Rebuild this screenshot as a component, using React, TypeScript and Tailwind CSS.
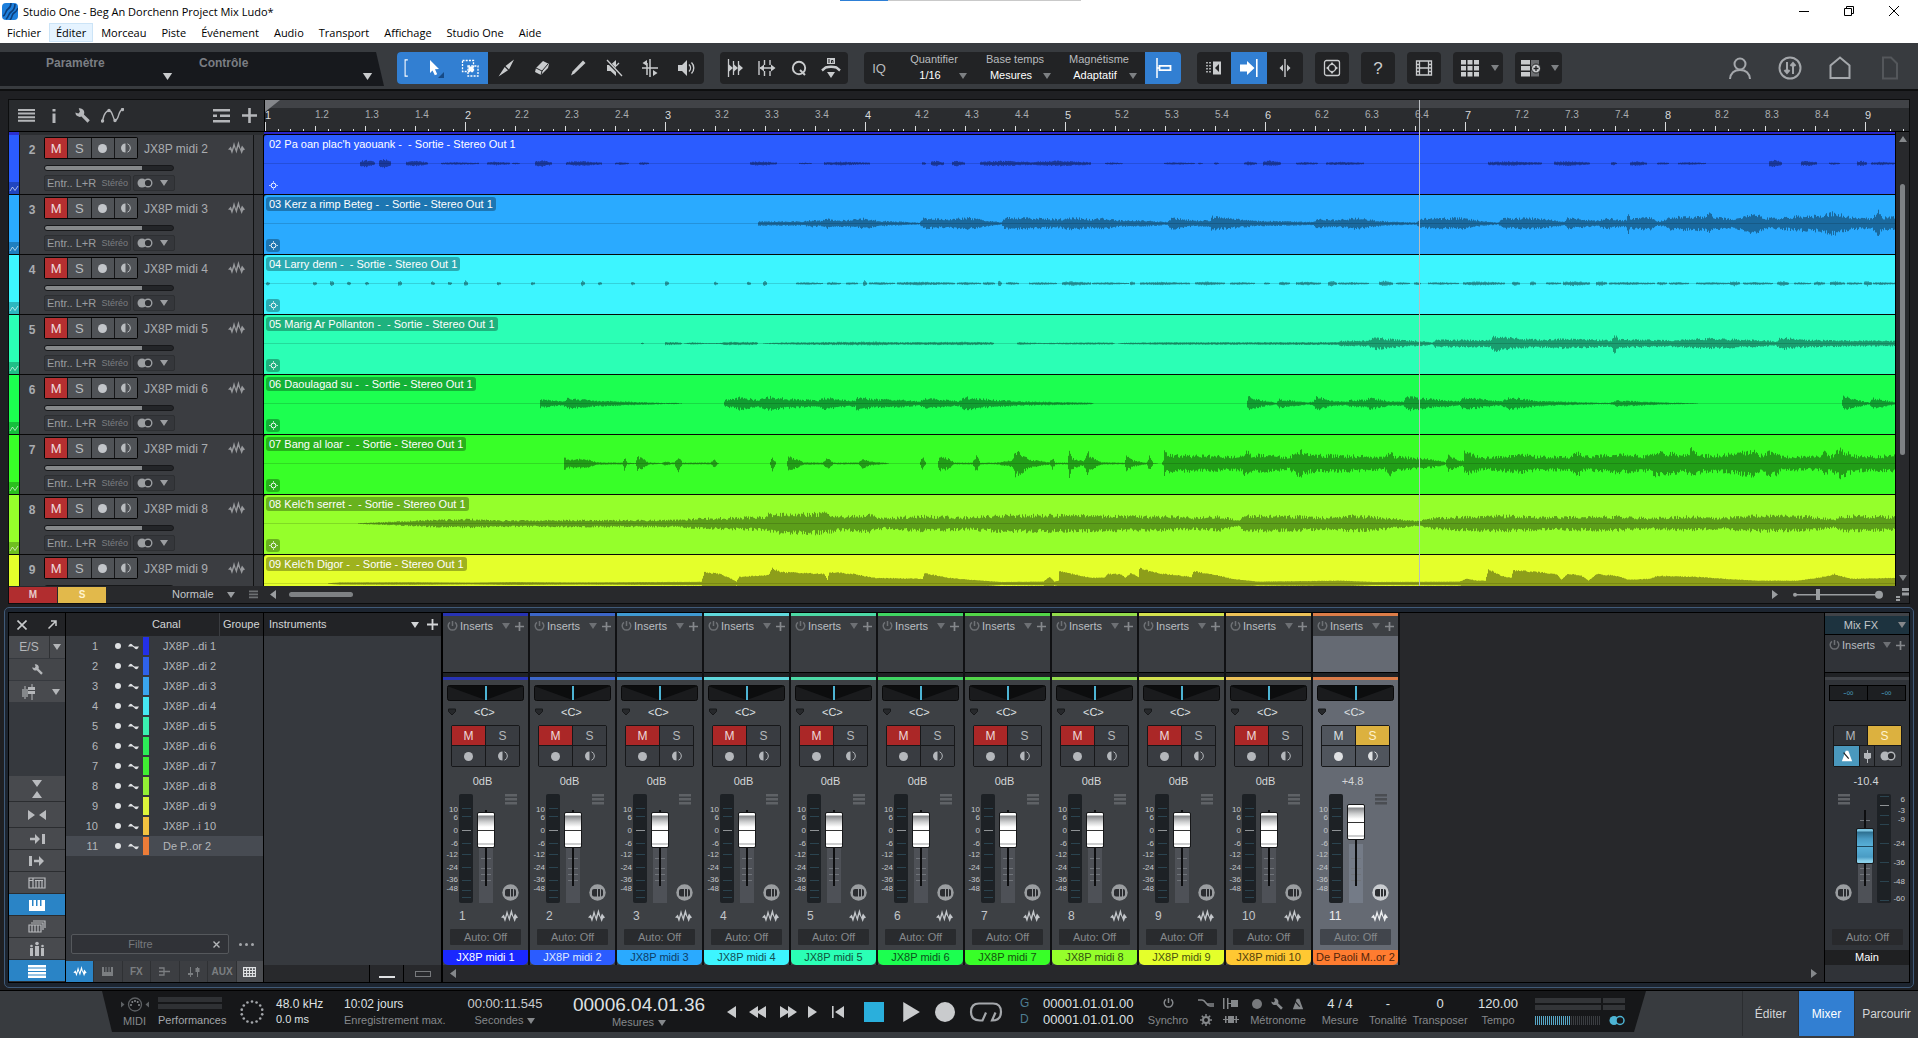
import type { ReactNode } from "react";
import clsx from "clsx";

type Point = [number, number];

interface Track {
  id: number;
  color: string;
  title: string;
  wave: Point[];
  solid?: boolean;
}

const LANE_WIDTH = 1633;
const LANE_CENTER = 28;

/* A burst is a short isolated sound: [start, end, amplitude]. */
const bursts = (list: [number, number, number][]): Point[] =>
  list.flatMap(([from, to, amp]): Point[] => [[from - 1, 0], [from, amp * 0.7], [from + (to - from) * 0.4, amp], [to, amp * 0.5], [to + 1, 0]]);

const WAVE_2 = bursts([
  [96, 110, 4], [115, 126, 5], [142, 163, 3], [177, 214, 1.4], [223, 245, 2], [248, 255, 1], [271, 287, 3.4], [302, 337, 2.6], [351, 364, 1.4], [375, 384, 1.6],
  [486, 512, 2.4], [535, 547, 1], [560, 605, 2], [658, 661, 2], [667, 679, 3], [688, 700, 3], [716, 770, 3], [771, 826, 3], [841, 858, 1.2], [900, 930, 1.3],
  [934, 938, 1], [950, 954, 1.4], [980, 992, 2], [999, 1016, 3.2], [1032, 1053, 1.5], [1062, 1099, 1.8], [1224, 1277, 2.4], [1290, 1325, 2.6], [1347, 1352, 2],
  [1366, 1382, 2.6], [1393, 1404, 1.5], [1414, 1441, 1.4], [1505, 1517, 4], [1537, 1552, 3], [1565, 1575, 1.3], [1593, 1602, 3], [1607, 1631, 1.8],
]);

const WAVE_3: Point[] = [
  [493, 0], [494, 2.4], [539, 2.5], [548, 4], [557, 3], [563, 5.5], [570, 3.5], [584, 4], [600, 6], [615, 3], [631, 2.4], [655, 1], [659, 6], [684, 5], [703, 7], [721, 3.4], [737, 1.5],
  [741, 7], [772, 6], [795, 5], [807, 7], [826, 5], [842, 6], [856, 3.6], [882, 3.4], [903, 1.6], [907, 7], [930, 3.4], [946, 3.6], [947, 8], [972, 5], [993, 3], [1049, 1.8], [1052, 5],
  [1073, 4], [1091, 6.5], [1120, 2.4], [1152, 1.2], [1156, 5.6], [1197, 6.5], [1221, 2.4], [1234, 1.2], [1238, 6], [1274, 6.4], [1300, 2], [1303, 6.5], [1332, 3], [1342, 6.5], [1359, 3.4],
  [1362, 5], [1364, 14], [1366, 6], [1385, 7.5], [1393, 2.4], [1401, 4], [1406, 7.5], [1441, 8], [1444, 12], [1449, 8], [1467, 5], [1484, 9], [1488, 12], [1500, 7], [1512, 6], [1533, 8.5],
  [1554, 9], [1570, 13], [1586, 7], [1607, 6], [1614, 14], [1618, 7], [1633, 8],
];

const WAVE_4 = bursts([
  ...[2, 49, 66, 83, 101, 134, 167, 184, 200, 233, 267, 317, 334, 367, 401, 450, 483, 499].map((x, i): [number, number, number] => [x, x + 3, i % 3 === 2 ? 3.4 : 2.2]),
  [532, 558, 1.4], [563, 576, 1.6], [582, 593, 1.6], [599, 602, 4], [605, 630, 1.6], [633, 690, 2], [693, 716, 1.6], [719, 730, 1.8], [734, 737, 3.4], [742, 754, 1.6], [765, 792, 1.5],
  [798, 826, 2.4], [828, 864, 1.4], [866, 870, 2.4], [876, 925, 1.8], [931, 960, 2], [966, 990, 1.5], [1000, 1005, 1.4], [1015, 1025, 2], [1032, 1056, 2], [1064, 1072, 3],
  [1074, 1104, 1.5], [1115, 1128, 3], [1132, 1145, 1.4], [1150, 1156, 2], [1164, 1194, 1.5], [1199, 1240, 2.2], [1248, 1255, 2.4], [1266, 1271, 2.6], [1282, 1296, 1.6], [1299, 1325, 2.6],
  [1332, 1342, 2.8], [1345, 1390, 1.6], [1393, 1402, 2], [1405, 1424, 1.5], [1432, 1465, 1.5], [1466, 1475, 3], [1479, 1508, 1.6], [1513, 1524, 2.6], [1530, 1546, 1.4],
  [1550, 1560, 2.2], [1566, 1580, 2.4], [1583, 1597, 1.5], [1600, 1607, 3], [1609, 1632, 1.6],
]);

const WAVE_5: Point[] = [
  [376, 0], [378, 1], [380, 0], [400, 0], [401, 1.8], [416, 1.2], [418, 0], [428, 1.4], [440, 0.5], [456, 0.6], [460, 1.8], [492, 1.6], [494, 0], [505, 0.6], [520, 1.2], [560, 1.6], [610, 2],
  [640, 1.4], [690, 1.8], [728, 1.5], [730, 0], [752, 0], [754, 1.6], [766, 1], [775, 0.6], [826, 1.2], [848, 1], [851, 0], [860, 0.8], [900, 1.4], [960, 1.4], [1073, 1.6], [1077, 3],
  [1104, 3.4], [1110, 7], [1126, 5], [1163, 2.2], [1168, 1.2], [1171, 4.4], [1226, 4], [1229, 9], [1247, 6.4], [1263, 5], [1285, 4.6], [1300, 6], [1330, 4.4], [1347, 3.6], [1350, 11], [1354, 5],
  [1406, 3.6], [1441, 6], [1459, 5.4], [1500, 3.6], [1512, 2.4], [1516, 7], [1539, 4.4], [1580, 3.4], [1633, 3],
];

const WAVE_6: Point[] = [
  [275, 0], [276, 5], [298, 2.4], [303, 6], [314, 5], [335, 3.2], [367, 2], [401, 0.6], [411, 0.8], [420, 0], [459, 0], [461, 4.4], [470, 5], [475, 7.4], [494, 4], [504, 8], [525, 5.4], [554, 3.6],
  [560, 7], [584, 3.4], [591, 3.6], [592, 7.6], [610, 5], [640, 4], [655, 2.4], [660, 6], [695, 2.8], [700, 7.4], [727, 4.4], [758, 2.4], [826, 1], [830, 0], [982, 0], [984, 8], [996, 4], [1012, 1],
  [1015, 5], [1044, 1.2], [1049, 2.6], [1052, 8], [1068, 3], [1083, 2], [1085, 4], [1102, 4], [1105, 7], [1126, 2.4], [1139, 2.4], [1142, 8.4], [1163, 5.6], [1195, 2.6], [1199, 7.4], [1237, 2.4],
  [1245, 7.4], [1274, 3], [1337, 0.8], [1345, 0.8], [1353, 3.4], [1406, 1], [1433, 0.3], [1436, 0], [1577, 0], [1579, 8], [1592, 4.4], [1605, 1], [1609, 6.4], [1631, 1.4], [1633, 1],
];

const WAVE_7: Point[] = [
  [299, 0], [300, 8], [304, 5], [324, 5], [332, 1.4], [358, 1], [360, 8], [363, 1], [371, 0.5], [373, 8], [377, 7], [384, 1.4], [397, 0.5], [401, 3], [406, 1], [410, 1.2], [414, 9], [418, 1], [446, 1],
  [450, 5], [453, 1], [455, 0], [505, 0], [508, 8], [512, 0], [522, 0], [524, 8], [531, 6], [539, 1.4], [558, 1], [563, 7], [569, 1], [594, 1], [598, 6], [605, 2.4], [621, 0.8], [626, 0], [655, 0],
  [658, 8], [662, 0], [673, 0], [675, 9], [684, 6], [690, 1], [708, 1], [712, 9], [716, 1], [732, 1], [748, 4], [751, 14], [757, 12], [764, 5], [785, 1.4], [788, 7], [791, 1], [803, 1], [805, 15],
  [808, 6], [819, 2.4], [823, 14], [827, 7], [837, 1.4], [860, 0.8], [862, 9], [869, 3.6], [882, 0.8], [885, 8], [889, 0.5], [897, 0], [899, 3], [900, 14], [903, 10], [940, 9], [977, 8], [981, 15],
  [988, 10], [1004, 10], [1025, 7], [1030, 12], [1036, 15], [1046, 10], [1099, 9], [1120, 7], [1125, 15], [1131, 8], [1152, 7], [1173, 4], [1181, 1.4], [1184, 9], [1195, 3.4], [1199, 4], [1200, 13],
  [1221, 7], [1258, 11], [1274, 8], [1306, 8], [1314, 14], [1319, 8], [1353, 11], [1385, 9], [1390, 14], [1422, 10], [1427, 17], [1438, 10], [1459, 10], [1488, 15], [1499, 9], [1504, 14], [1512, 13],
  [1517, 8], [1555, 8], [1561, 15], [1565, 8], [1576, 16], [1592, 9], [1629, 9], [1633, 13],
];

const WAVE_8: Point[] = [
  [90, 0], [100, 0.8], [128, 2], [165, 4], [208, 5], [234, 3.6], [313, 4], [360, 4], [409, 4], [435, 6], [472, 7], [501, 8], [504, 11], [562, 12], [573, 8], [605, 10], [620, 6], [652, 9], [705, 7.4],
  [737, 10], [826, 9.4], [866, 8.4], [903, 8.4], [930, 7], [956, 8.4], [975, 3.4], [980, 9.4], [1036, 8.4], [1062, 7], [1089, 9.4], [1120, 7], [1155, 2.6], [1163, 6], [1195, 8], [1237, 9.4],
  [1279, 7.4], [1353, 8.4], [1385, 6.4], [1422, 8.4], [1454, 6.4], [1491, 9.4], [1544, 8.4], [1570, 5], [1578, 9.4], [1633, 8],
];

const WAVE_9: Point[] = [
  [60, 0], [75, 1.2], [149, 1.4], [208, 1], [245, 1.6], [313, 1.2], [437, 1.8], [440, 12], [456, 10], [467, 5], [472, 2], [475, 7], [504, 9], [508, 16], [517, 12], [541, 11], [560, 10], [563, 4],
  [565, 12], [589, 10], [610, 6], [658, 5], [660, 11], [684, 6], [705, 4], [737, 1.6], [779, 2], [785, 7], [790, 2], [794, 3], [795, 13], [826, 6], [840, 6], [843, 10], [856, 10], [861, 6], [866, 11],
  [874, 7], [875, 16], [893, 11], [927, 7], [929, 13], [956, 8], [967, 5], [993, 2], [1078, 3], [1110, 1.6], [1195, 2], [1202, 5], [1213, 3], [1221, 3], [1224, 15], [1237, 8], [1247, 6], [1249, 14],
  [1274, 12], [1292, 10], [1297, 4], [1303, 10], [1316, 9], [1324, 3], [1332, 10], [1353, 8], [1364, 4], [1385, 5], [1393, 8], [1433, 7], [1459, 5], [1491, 3], [1533, 3], [1565, 8], [1570, 10],
  [1586, 5], [1633, 6],
];

const TRACKS: Track[] = [
  { id: 2, color: "bg-[#2b5cff]", title: "02 Pa oan plac'h yaouank -  - Sortie - Stereo Out 1", wave: WAVE_2 },
  { id: 3, color: "bg-[#2aaaff]", title: "03 Kerz a rimp Beteg -  - Sortie - Stereo Out 1", wave: WAVE_3 },
  { id: 4, color: "bg-[#3df5ff]", title: "04 Larry denn -  - Sortie - Stereo Out 1", wave: WAVE_4 },
  { id: 5, color: "bg-[#2bffb5]", title: "05 Marig Ar Pollanton -  - Sortie - Stereo Out 1", wave: WAVE_5 },
  { id: 6, color: "bg-[#1cff50]", title: "06 Daoulagad su -  - Sortie - Stereo Out 1", wave: WAVE_6 },
  { id: 7, color: "bg-[#38ff28]", title: "07 Bang al loar -  - Sortie - Stereo Out 1", wave: WAVE_7 },
  { id: 8, color: "bg-[#95ff2b]", title: "08 Kelc'h serret -  - Sortie - Stereo Out 1", wave: WAVE_8 },
  { id: 9, color: "bg-[#e4ff2b]", title: "09 Kelc'h Digor -  - Sortie - Stereo Out 1", wave: WAVE_9, solid: true },
];

const CHANNELS = [
  { id: 1, name: "JX8P midi 1", short: "JX8P ..di 1", bar: "bg-[#2733b4]", chip: "bg-[#2330e8]", tag: "bg-[#1a28ff] text-white" },
  { id: 2, name: "JX8P midi 2", short: "JX8P ..di 2", bar: "bg-[#3c66c8]", chip: "bg-[#2f62ea]", tag: "bg-[#2b5cff] text-[#dfe8ff]" },
  { id: 3, name: "JX8P midi 3", short: "JX8P ..di 3", bar: "bg-[#3f9ad2]", chip: "bg-[#3aa5ee]", tag: "bg-[#2aaaff] text-[#0d3c66]" },
  { id: 4, name: "JX8P midi 4", short: "JX8P ..di 4", bar: "bg-[#5fd8dc]", chip: "bg-[#45e8f2]", tag: "bg-[#3df5ff] text-[#125054]" },
  { id: 5, name: "JX8P midi 5", short: "JX8P ..di 5", bar: "bg-[#4cd9a6]", chip: "bg-[#3af0b0]", tag: "bg-[#2bffb5] text-[#0f523b]" },
  { id: 6, name: "JX8P midi 6", short: "JX8P ..di 6", bar: "bg-[#3fd562]", chip: "bg-[#2cec57]", tag: "bg-[#1cff50] text-[#0b521c]" },
  { id: 7, name: "JX8P midi 7", short: "JX8P ..di 7", bar: "bg-[#52d548]", chip: "bg-[#40ee32]", tag: "bg-[#38ff28] text-[#14520e]" },
  { id: 8, name: "JX8P midi 8", short: "JX8P ..di 8", bar: "bg-[#93dc4c]", chip: "bg-[#93f034]", tag: "bg-[#95ff2b] text-[#30520f]" },
  { id: 9, name: "JX8P midi 9", short: "JX8P ..di 9", bar: "bg-[#d3e14e]", chip: "bg-[#dcf53a]", tag: "bg-[#e4ff2b] text-[#4a520f]" },
  { id: 10, name: "JX8P midi 10", short: "JX8P ..i 10", bar: "bg-[#edc258]", chip: "bg-[#f2c240]", tag: "bg-[#ffc832] text-[#543f0c]" },
  { id: 11, name: "De Paoli M..or 2", short: "De P..or 2", bar: "bg-[#dc7c48]", chip: "bg-[#ec7c38]", tag: "bg-[#ff7c30] text-[#54250b]" },
];

const MENUS = ["Fichier", "Éditer", "Morceau", "Piste", "Événement", "Audio", "Transport", "Affichage", "Studio One", "Aide"];

export default function App() {
  return (
    <div className="flex h-screen flex-col overflow-hidden bg-[#1f2023] font-['Liberation_Sans',Arial,sans-serif] text-[11px] leading-none text-[#c3c6ca]">
      <TitleBar />
      <Toolbar />
      <Arrangement />
      <Mixer />
      <Transport />
    </div>
  );
}

/* ---------- window chrome ---------- */

function TitleBar() {
  return (
    <header className="bg-white font-['Open_Sans','Noto_Sans',sans-serif] text-[11px] text-black">
      <div className="relative flex h-[22px] items-center justify-between pr-0.5 pl-0.5">
        <div className="flex items-center gap-[5px]">
          <svg width="16" height="17" viewBox="0 0 16 17">
            <rect width="16" height="17" rx="4" fill="#1d7fdc" />
            <path d="M1 13c3-1 2-5 5-7s3-4 3-6M4 16c3-2 2-5 5-7s4-4 4-8M8 17c3-3 1-5 4-7s3-3 4-5" stroke="#0c3f7c" strokeWidth="1.6" fill="none" />
          </svg>
          <h1>Studio One - Beg An Dorchenn Project Mix Ludo*</h1>
        </div>
        <div className="absolute top-0 left-[840px] flex h-px w-[241px] bg-[#c9c9c9]"><span className="w-12 bg-[#2d7fd6]" /></div>
        <div className="flex">
          <WindowButton label="Réduire"><path d="M0 5.500h10" /></WindowButton>
          <WindowButton label="Restaurer"><path d="M.5 2.500h7v7h-7zM2.500 2.500v-2h7v7h-2" /></WindowButton>
          <WindowButton label="Fermer"><path d="M0 0l10 10M10 0L0 10" /></WindowButton>
        </div>
      </div>
      <nav className="flex h-[21px] items-center gap-px">
        {MENUS.map((menu) => (
          <button key={menu} type="button" className={clsx("h-[19px] border px-1.5", menu === "Éditer" ? "border-[#cce4f7] bg-[#e5f3ff]" : "border-transparent")}>{menu}</button>
        ))}
      </nav>
    </header>
  );
}

function WindowButton({ label, children }: { label: string; children: ReactNode }) {
  return (
    <button type="button" aria-label={label} className="flex w-[45px] justify-center">
      <svg width="10" height="10" viewBox="0 0 10 10" fill="none" stroke="#000">{children}</svg>
    </button>
  );
}

/* ---------- shared pieces ---------- */

function Caret({ className }: { className?: string }) {
  return <svg width="8" height="6" viewBox="0 0 8 6" className={clsx("shrink-0 fill-current", className)}><path d="M0 0h8L4 6z" /></svg>;
}

function WaveIcon({ className }: { className?: string }) {
  return (
    <svg width="17" height="14" viewBox="0 0 17 14" className={clsx("shrink-0 fill-current", className)}>
      <path d="M0 8.500L2.800 5.500 4 8.500 6 1l2 7L10.500 0l2 8L14 4.500 17 8.500 15 9.500 13.700 13 12 8.500 10.300 5.500 8.500 12.500 6.200 6 4 13 2.500 9z" />
    </svg>
  );
}

function Lines({ className }: { className?: string }) {
  return <svg width="12" height="11" viewBox="0 0 12 11" className={clsx("shrink-0 fill-current", className)}><path d="M0 0h12v2.500H0zM0 4h12v2.500H0zM0 8h12v2.500H0z" /></svg>;
}

function Wrench({ size = 14 }: { size?: number }) {
  return (
    <svg width={size} height={size} viewBox="0 0 14 14" className="shrink-0 fill-current">
      <path d="M3.500.3A4.200 4.200 0 018.300 6L13.800 11.500 11.700 13.700 6 8A4.200 4.200 0 01.3 4.200L3.200 5.200 4.600 3.600z" />
    </svg>
  );
}

function Power() {
  return <svg width="11" height="12" viewBox="0 0 11 12" fill="none" stroke="currentColor" strokeWidth="1.500" className="shrink-0"><path d="M5.500 1v5M3 2.300a4.300 4.300 0 105 0" /></svg>;
}

function Monitor() {
  return <svg width="10" height="10" viewBox="0 0 10 10" className="shrink-0"><path d="M4.500.500v9a4.500 4.500 0 010-9z" fill="currentColor" /><path d="M6.500.800a4.500 4.500 0 010 8.400" fill="none" stroke="currentColor" /></svg>;
}

function Stereo({ className }: { className?: string }) {
  return <svg width="16" height="10" viewBox="0 0 16 10" className={clsx("shrink-0", className)}><circle cx="5" cy="5" r="4.500" fill="currentColor" /><circle cx="11" cy="5" r="3.800" fill="#2b2d31" stroke="currentColor" strokeWidth="1.400" /></svg>;
}

function Metronome({ size = 14 }: { size?: number }) {
  return <svg width={size} height={size} viewBox="0 0 14 14" className="shrink-0"><path d="M5.500 1h3L13 13H1z" fill="currentColor" /><path d="M3 3l6 7" stroke="#1f2023" strokeWidth="1.400" /></svg>;
}

/* ---------- toolbar ---------- */

function Tool({ label, active, width = "w-[36px]", size = 20, children }: { label: string; active?: boolean; width?: string; size?: number; children: ReactNode }) {
  return (
    <button type="button" aria-label={label} className={clsx("flex h-8 shrink-0 items-center justify-center", width, active ? "bg-[#327fd2] text-white" : "text-[#c9cbcd]")}>
      <svg width={size} height={size} viewBox="0 0 20 20" fill="currentColor" stroke="none">{children}</svg>
    </button>
  );
}

function ToolGroup({ className, children }: { className?: string; children: ReactNode }) {
  return <div className={clsx("flex h-8 shrink-0 items-center overflow-hidden rounded-[4px] bg-[#222325]", className)}>{children}</div>;
}

function ToolSelect({ label, value, width }: { label: string; value: string; width: string }) {
  return (
    <label className={clsx("flex flex-col items-center gap-0.5", width)}>
      <span className="h-[13px] text-[#b9bbbe]">{label}</span>
      <span className="flex w-full items-center">
        <select className="h-[14px] min-w-0 flex-1 appearance-none bg-transparent text-center text-[11px] text-white outline-none"><option>{value}</option></select>
        <Caret className="text-[#7d8083]" />
      </span>
    </label>
  );
}

function Toolbar() {
  return (
    <div className="flex h-12 shrink-0 items-start border-b-2 border-[#0e0f10] bg-[#383b3f] pt-[9px]">
      <div className="flex h-[34px] w-[384px] shrink-0 bg-[#17191d] font-bold text-[12px] text-[#7b7e83] [clip-path:polygon(0_0,376px_0,100%_100%,0_100%)]">
        <div className="flex w-[173px] justify-between pl-[46px]"><span className="pt-[5px]">Paramètre</span><Caret className="mt-[21px] h-[7px] w-[11px] text-[#c9cbcd]" /></div>
        <div className="flex w-[200px] justify-between pl-[26px]"><span className="pt-[5px]">Contrôle</span><Caret className="mt-[21px] h-[7px] w-[11px] text-[#c9cbcd]" /></div>
      </div>

      <ToolGroup className="ml-[13px]">
        <Tool label="Plage" active width="w-[18px]" size={24}><path d="M12 1H9v18h3" fill="none" stroke="currentColor" strokeWidth="1.200" /></Tool>
        <Tool label="Flèche" active width="w-[37px]"><path d="M6 2l9 9-4 .3 2.200 5-2.400 1L8.500 12.500 6 15z" /><path d="M20 14v6h-6z" fill="#164a86" /></Tool>
        <Tool label="Sélection" active><path d="M2.500 2.500h11v11h-11z" fill="none" stroke="currentColor" strokeWidth="1.300" strokeDasharray="2 1.200" /><path d="M8 8h10v10H8z" fill="none" stroke="currentColor" strokeWidth="1.300" strokeDasharray="2 1.200" /><path d="M8.500 8.500h5v5h-5z" /></Tool>
        <Tool label="Couper"><path d="M18 1.500L9.500 8l3.500 3.500zM8.700 9l3.300 3.300L2.500 18.500z" /></Tool>
        <Tool label="Gomme"><path d="M11 3l6 3-1 4-7 7-6-3 1-4z" /><path d="M4 10l6 3 6-7M10 13l-1 4" stroke="#222325" strokeWidth="1" fill="none" /></Tool>
        <Tool label="Crayon"><path d="M15 2.500l2.500 2.500L6.500 15.500 3 17.500l1.500-4z" /></Tool>
        <Tool label="Muet"><path d="M3 7h3.500L12 2v16l-5.500-5H3z" /><path d="M2 2l16 16" stroke="#222325" strokeWidth="3" /><path d="M3 2l15 16M15 5l-3 3" stroke="currentColor" strokeWidth="1.300" /></Tool>
        <Tool label="Fléchir"><path d="M10 1v18M7 5v12M2 10h16" stroke="currentColor" strokeWidth="1.500" /><path d="M7 2L2.500 5 7 8zM13 12l4.500 3-4.500 3z" /></Tool>
        <Tool label="Écouter"><path d="M2 7h4l5-5v16l-5-5H2z" /><path d="M13 6.500c2 2 2 5 0 7M15.500 4.500c3 3 3 8 0 11" stroke="currentColor" strokeWidth="1.400" fill="none" /></Tool>
      </ToolGroup>

      <ToolGroup className="ml-4">
        <Tool label="Transitoires" width="w-[29px]"><path d="M3.500 1v18M8.500 3v14M13.500 3v14" stroke="currentColor" strokeWidth="1.300" /><path d="M4 6.500L8 10l-4 3.500zM9 6.500l4 3.500-4 3.500zM14 6.500l4 3.500-4 3.500z" /></Tool>
        <Tool label="Étirer" width="w-[35px]"><path d="M2 3v14M7.500 2v5M7.500 13v5M13 2v5M13 13v5M3 10h14" stroke="currentColor" strokeWidth="1.400" /><path d="M7 6.500L2.500 10 7 13.500zM14 6.500l4.500 3.500-4.500 3.500z" /></Tool>
        <Tool label="Quantifier" width="w-[30px]"><circle cx="10" cy="10" r="6.200" fill="none" stroke="currentColor" strokeWidth="1.900" /><path d="M11 12l5 5" stroke="currentColor" strokeWidth="1.900" /></Tool>
        <Tool label="Groove" width="w-[34px]"><path d="M6 0h8v6H6zM6 14h8l-4 6z" /><path d="M8 1v4M10.500 5V2.500H12V5" stroke="#222325" fill="none" /><path d="M1 12.500l3.500-3q5.500-1.500 11 0l3.500 3" fill="none" stroke="currentColor" strokeWidth="2.400" /></Tool>
      </ToolGroup>

      <ToolGroup className="ml-4">
        <button type="button" className="w-[30px] text-[13px] text-[#b9bbbe]">IQ</button>
        <ToolSelect label="Quantifier" value="1/16" width="ml-[7px] w-[66px]" />
        <ToolSelect label="Base temps" value="Mesures" width="ml-[12px] w-[72px]" />
        <ToolSelect label="Magnétisme" value="Adaptatif" width="mr-[8px] ml-[10px] w-[76px]" />
        <Tool label="Magnétisme actif" active><path d="M4 0v20M4 10h2" stroke="currentColor" strokeWidth="1.500" /><path d="M6.500 7.800h11v4.400h-11z" fill="none" stroke="currentColor" strokeWidth="1.800" /></Tool>
      </ToolGroup>

      <ToolGroup className="ml-4">
        <Tool label="Retour auto" width="w-[34px]"><path d="M3 4v12M6 4v12" stroke="currentColor" strokeWidth="1.600" strokeDasharray="1.500 1.500" /><path d="M9 3.500h8v13H9z" /><path d="M15 6l-4 4 4 4z" fill="#222325" /></Tool>
        <Tool label="Défilement auto" active><path d="M1 6.500h7V3l7.500 7L8 17v-3.500H1zM17 1h1.600v18H17z" /></Tool>
        <Tool label="Curseur" width="w-[36px]"><path d="M10 1v18" stroke="currentColor" strokeWidth="1.400" /><path d="M8 6.500L4.500 10 8 13.500zM12 6.500l3.500 3.500-3.500 3.500z" /></Tool>
      </ToolGroup>
      <ToolGroup className="ml-3"><Tool label="Macro" width="w-[34px]"><rect x="2.500" y="2.500" width="15" height="15" rx="2" fill="none" stroke="currentColor" strokeWidth="1.300" /><circle cx="10" cy="10" r="3.600" fill="none" stroke="currentColor" strokeWidth="1.400" /><path d="M10 4L12 6.500H8zM10 16L8 13.500h4zM4 10L6.500 8v4zM16 10L13.500 12V8z" /></Tool></ToolGroup>
      <ToolGroup className="ml-3"><button type="button" className="w-[34px] text-[17px] text-[#c9cbcd]">?</button></ToolGroup>
      <ToolGroup className="ml-3"><Tool label="Vidéo" width="w-[34px]"><path d="M2.500 3h15v14h-15zM5.500 3v14M14.500 3v14M5.500 10h9M2.500 6.500h3M2.500 10h3M2.500 13.500h3M14.500 6.500h3M14.500 10h3M14.500 13.500h3" fill="none" stroke="currentColor" strokeWidth="1.300" /></Tool></ToolGroup>
      <ToolGroup className="ml-3"><Tool label="Grille" width="w-[34px]"><path d="M1 2h5v4.500H1zM7.500 2h5v4.500h-5zM14 2h5v4.500h-5zM1 8h5v4.500H1zM7.500 8h5v4.500h-5zM14 8h5v4.500h-5zM1 14h5v4.500H1zM7.500 14h5v4.500h-5zM14 14h5v4.500h-5z" /></Tool><Caret className="mr-1 ml-1 text-[#7d8083]" /></ToolGroup>
      <ToolGroup className="ml-3"><Tool label="Ajouter piste" width="w-[32px]"><path d="M0 2h9v4.500H0zM0 8h9v4.500H0zM0 14h9v4.500H0z" /><path d="M10 2h8v16.500h-8z" fill="#6c6e71" /><circle cx="15" cy="10.500" r="4.500" stroke="#222325" /><path d="M15 8v5M12.500 10.500h5" stroke="#222325" strokeWidth="1.300" /></Tool><Caret className="mr-[3px] ml-1 text-[#7d8083]" /></ToolGroup>

      <div className="ml-auto flex h-8 items-center gap-[26px] pr-4 text-[#a4a7ab]">
        <RightIcon label="Compte"><circle cx="12" cy="8" r="5.500" /><path d="M2 23q1-9 10-9t10 9" /></RightIcon>
        <RightIcon label="Synchroniser"><circle cx="12" cy="12" r="10.500" /><path d="M9 6v11M6.500 14L9 17l2.500-3M15 18V7M12.500 10L15 7l2.500 3" /></RightIcon>
        <RightIcon label="Accueil"><path d="M2.500 22V9.500L12 1.500l9.500 8V22z" /></RightIcon>
        <RightIcon label="Document" dim><path d="M5 1.500h8l6 6V22.500H5z" /></RightIcon>
      </div>
    </div>
  );
}

function RightIcon({ label, dim, children }: { label: string; dim?: boolean; children: ReactNode }) {
  return (
    <button type="button" aria-label={label} className={dim ? "text-[#54575b]" : undefined}>
      <svg width="24" height="24" viewBox="0 0 24 24" fill="none" stroke="currentColor" strokeWidth="2">{children}</svg>
    </button>
  );
}

/* ---------- arrangement ---------- */

function Arrangement() {
  return (
    <section className="relative mx-2 mt-2 flex min-h-0 flex-1 flex-col border border-[#0c0d0e] bg-[#28292c]">
      <div className="flex h-8 shrink-0 border-b border-black">
        <div className="flex w-[255px] shrink-0 items-center bg-[#292b2e] text-[#b4b6b9]">
          <button type="button" aria-label="Liste des pistes" className="ml-[9px]"><svg width="17" height="13" viewBox="0 0 17 13" fill="currentColor"><path d="M0 0h17v2H0zM0 3.600h17v2H0zM0 7.200h17v2H0zM0 10.800h17v2H0z" /></svg></button>
          <button type="button" aria-label="Inspecteur" className="ml-[17px]"><svg width="4" height="14" viewBox="0 0 4 14" fill="currentColor"><path d="M.5 0h3v2.600h-3zM.5 4.500h3V14h-3z" /></svg></button>
          <button type="button" aria-label="Options" className="ml-[19px]"><Wrench size={15} /></button>
          <button type="button" aria-label="Automation" className="ml-[11px]"><svg width="23" height="15" viewBox="0 0 23 15" fill="none" stroke="currentColor" strokeWidth="1.400"><path d="M1.500 13C3 5 6 2 9 3s3 10 6 9 2-9 6.500-10.500" /><circle cx="1.500" cy="13" r="1" fill="currentColor" /><circle cx="8" cy="2.500" r="1" fill="currentColor" /><circle cx="14" cy="12.500" r="1" fill="currentColor" /><circle cx="21.500" cy="1.500" r="1" fill="currentColor" /></svg></button>
          <button type="button" aria-label="Groupes" className="ml-auto"><svg width="17" height="14" viewBox="0 0 17 14" fill="currentColor"><path d="M0 0h17v2.600H0zM0 11h17v2.600H0zM0 5.500h4V8H0zM7 5.500h10V8H7z" /></svg></button>
          <button type="button" aria-label="Ajouter une piste" className="mr-[7px] ml-[12px]"><svg width="15" height="15" viewBox="0 0 15 15" fill="currentColor"><path d="M6.200 0h2.600v6.200H15v2.600H8.800V15H6.200V8.800H0V6.200h6.200z" /></svg></button>
        </div>
        <Ruler />
      </div>

      <div className="flex min-h-0 flex-1">
        <div className="min-w-0 flex-1 overflow-hidden">
          <div className="flex h-[3px]">
            <div className="w-[10px] bg-[#2a2fd0]" />
            <div className="w-[245px] bg-[#2c2e31]" />
            <div className="flex-1 border-b border-black bg-[#2a25c8]" />
          </div>
          {TRACKS.map((track) => <TrackRow key={track.id} track={track} />)}
        </div>
        <div className="flex w-[14px] shrink-0 flex-col items-center border-l border-black bg-[#28292c] pt-[4px] pb-[5px] text-[#85888b]">
          <Caret className="rotate-180" />
          <div className="mt-[42px] h-[271px] w-[5px] rounded-full bg-[#7e8184]" />
          <Caret className="mt-auto" />
        </div>
      </div>

      <div className="flex h-[17px] shrink-0 items-center bg-[#28292c] text-[#9a9da0]">
        <button type="button" className="h-4 w-12 bg-[#b12d2f] pt-px font-bold text-[10px] text-[#e8c9c9]">M</button>
        <button type="button" className="ml-px h-4 w-12 bg-[#e2b94b] pt-px font-bold text-[10px] text-[#fff3cf]">S</button>
        <select aria-label="Hauteur des pistes" className="ml-[60px] w-[58px] appearance-none bg-transparent px-[6px] text-[11px] text-[#c3c6ca] outline-none"><option>Normale</option></select>
        <Caret className="ml-[3px]" />
        <Lines className="ml-[14px] h-[9px] w-[9px] text-[#6d7073]" />
        <svg width="6" height="9" viewBox="0 0 6 9" className="ml-[12px] fill-current"><path d="M6 0v9L0 4.500z" /></svg>
        <div className="ml-[13px] h-[5px] w-16 rounded-full bg-[#7e8184]" />
        <svg width="6" height="9" viewBox="0 0 6 9" className="ml-auto fill-current"><path d="M0 0v9l6-4.500z" /></svg>
        <svg width="92" height="11" viewBox="0 0 92 11" className="mr-3 ml-[14px] fill-current"><path d="M3 5h84v1.500H3zM24 0h4v11h-4z" /><circle cx="3" cy="5.700" r="2" /><circle cx="87" cy="5.700" r="4" /></svg>
        <svg width="13" height="13" viewBox="0 0 13 13" className="fill-current"><path d="M6 0h7v3H6zM6 4.500h7v3H6zM0 8h4v2H0zM0 11h4v2H0z" /></svg>
      </div>
      <div className="pointer-events-none absolute top-0 bottom-[17px] left-[1410px] w-px bg-[#b8bcc0]" />
    </section>
  );
}

const RULER_BARS = [1, 2, 3, 4, 5, 6, 7, 8, 9].map((bar) => ({ bar, beats: bar === 9 ? [1] : [1, 2, 3, 4] }));

function Ruler() {
  return (
    <div className="relative flex min-w-0 flex-1 overflow-hidden border-l border-black bg-[linear-gradient(#414347_8px,#2a2c2f_8px)]">
      <svg width="15" height="12" viewBox="0 0 15 12" className="absolute top-0 left-0 fill-[#85878b]"><path d="M0 0h15L0 12z" /></svg>
      {RULER_BARS.map(({ bar, beats }) => (
        <div key={bar} className="w-[200px] shrink-0">
          <div className="flex h-[22px] pt-[10px]">
            {beats.map((beat) => (
              <span key={beat} className={clsx("w-[50px] shrink-0", beat === 1 ? "text-[11px] text-[#d8dadc]" : "text-[10px] text-[#a9acaf]")}>{beat === 1 ? bar : `${bar}.${beat}`}</span>
            ))}
          </div>
          <svg width="200" height="9" viewBox="0 0 200 9" className="block fill-[#d8dadc]">
            {Array.from({ length: 16 }, (_, i) => {
              const h = i === 0 ? 9 : i % 4 === 0 ? 5 : 2;
              return <rect key={i} x={Math.round(i * 12.5)} y={9 - h} width="1" height={h} />;
            })}
          </svg>
        </div>
      ))}
    </div>
  );
}

function TrackRow({ track }: { track: Track }) {
  return (
    <div className="flex h-15 border-b border-black/80">
      <div className={clsx("flex w-[10px] shrink-0 flex-col justify-end", track.color)}>
        <svg width="10" height="12" viewBox="0 0 10 12" className="bg-black/25"><path d="M1 9l2.500-4 2.500 3.500L9 4" fill="none" stroke="#fff" strokeOpacity=".6" /></svg>
      </div>
      <div className="flex w-[235px] shrink-0 border-x border-black/70 bg-[#3b3d41]">
        <span className="w-[24px] pt-[9px] text-center font-bold text-[12px] text-[#a9acb0]">{track.id}</span>
        <div>
          <div className="flex items-center pt-[2px]">
            <div className="flex h-[22px] w-[94px] gap-px rounded-[2px] border border-black/70 bg-black/60 text-[#b9bcbf]">
              <button type="button" className="flex-1 bg-[#b52f30] text-[13px] text-[#f0dcdc]">M</button>
              <button type="button" className="flex-1 bg-[#505357] text-[13px]">S</button>
              <button type="button" aria-label="Armer" className="flex flex-1 items-center justify-center bg-[#505357]"><span className="size-[9px] rounded-full bg-[#c3c6ca]" /></button>
              <button type="button" aria-label="Monitoring" className="flex flex-1 items-center justify-center bg-[#505357]"><Monitor /></button>
            </div>
            <span className="ml-1.5 w-[84px] pt-px text-[12px] text-[#a9acb0]">JX8P midi {track.id}</span>
            <WaveIcon className="text-[#97999c]" />
          </div>
          <input type="range" aria-label={`Volume JX8P midi ${track.id}`} defaultValue={76} className="mt-[6px] block h-[6px] w-[130px] appearance-none rounded-full border border-[#17181a] bg-[linear-gradient(to_right,#85888a_76%,#232528_76%)] [&::-webkit-slider-thumb]:appearance-none" />
          <div className="mt-[4px] flex h-4 gap-[2px] text-[#9b9ea1]">
            <button type="button" className="flex w-[87px] items-center justify-between rounded-[2px] border border-[#2d2f32] bg-[#35373b] px-0.5 text-[11px] whitespace-nowrap">Entr.. L+R <span className="text-[9px] text-[#7b7e81]">Stéréo</span></button>
            <button type="button" aria-label="Canaux" className="flex w-[42px] items-center justify-between rounded-[2px] border border-[#2d2f32] bg-[#35373b] px-[3px] pr-[6px]"><Stereo /><Caret /></button>
          </div>
        </div>
      </div>
      <div className="w-[10px] shrink-0 border-r border-black bg-[#37393d]" />
      <div className={clsx("relative min-w-0 flex-1 overflow-hidden rounded-tl-[3px]", track.color)}>
        <Waveform track={track} />
        <span className={clsx("absolute top-[2px] left-[2px] h-[14px] rounded-[3px] px-[3px] text-[11px] leading-[14px] whitespace-pre text-white", track.id > 2 && "bg-black/30")}>{track.title}</span>
        <span className={clsx("absolute bottom-[2px] left-[2px] flex h-[13px] w-[14px] items-center justify-center rounded-[3px]", track.id > 2 && "bg-black/30")}>
          <svg width="9" height="9" viewBox="0 0 9 9" fill="none" stroke="#fff"><circle cx="4.500" cy="4.500" r="2.400" /><path d="M4.500 0v1.500M4.500 7.500V9M0 4.500h1.500M7.500 4.500H9" strokeOpacity=".7" /></svg>
        </span>
      </div>
    </div>
  );
}

function noise(n: number) {
  const v = Math.sin(n * 127.1) * 43758.5453;
  return v - Math.floor(v);
}

function wavePath(points: Point[], seed: number, solid?: boolean) {
  let d = "";
  let k = 0;
  for (let x = Math.ceil(points[0][0]); x < LANE_WIDTH; x++) {
    while (k < points.length - 2 && points[k + 1][0] <= x) k++;
    const [x0, a0] = points[k];
    const [x1, a1] = points[k + 1];
    if (x > x1) break;
    const amp = a0 + ((a1 - a0) * (x - x0)) / (x1 - x0);
    if (amp < 0.25) continue;
    const floor = solid ? 0.88 : 0.55;
    const up = amp * (floor + (1 - floor) * noise(x + seed * 31));
    const down = amp * (floor + (1 - floor) * noise(x * 3 + seed * 17));
    d += `M${x + 0.5} ${(LANE_CENTER + 0.5 - up).toFixed(1)}V${(LANE_CENTER + 0.5 + down).toFixed(1)}`;
  }
  return d;
}

function Waveform({ track }: { track: Track }) {
  return (
    <svg width={LANE_WIDTH} height="59" viewBox={`0 0 ${LANE_WIDTH} 59`} className="block max-w-none" stroke="#000">
      <path d={wavePath(track.wave, track.id, track.solid)} strokeOpacity=".38" />
      <path d={`M0 ${LANE_CENTER + 0.5}H${LANE_WIDTH}`} strokeOpacity=".14" />
    </svg>
  );
}

/* ---------- mixer ---------- */

function Mixer() {
  return (
    <section className="mx-1 mt-[3px] shrink-0 rounded-[5px] border border-[#405a78] bg-[#1d2530] px-[3px] py-1">
      <div className="flex h-[371px] border border-black bg-[#27282b]">
        <MixerTools />
        <ChannelList />
        <Instruments />
        <div className="flex min-w-0 flex-1 flex-col bg-[#27282b]">
          <div className="flex">
            {CHANNELS.map((channel) => <ChannelStrip key={channel.id} channel={channel} selected={channel.id === 11} />)}
          </div>
          <div className="mt-auto flex h-[18px] items-center justify-between px-[7px] text-[#85888b]">
            <svg width="6" height="9" viewBox="0 0 6 9" className="fill-current"><path d="M6 0v9L0 4.500z" /></svg>
            <svg width="6" height="9" viewBox="0 0 6 9" className="fill-current"><path d="M0 0v9l6-4.500z" /></svg>
          </div>
        </div>
        <MainStrip />
      </div>
    </section>
  );
}

function SideButton({ label, active, tall, children }: { label: string; active?: boolean; tall?: boolean; children: ReactNode }) {
  return (
    <button type="button" aria-label={label} className={clsx("flex w-full shrink-0 items-center justify-center border-b border-[#2b2d30]", tall ? "h-[26px]" : "h-[22px]", active ? "bg-[#2a84c6] text-white" : "bg-[#484a4e] text-[#b9bbbe]")}>
      <svg width="18" height="18" viewBox="0 0 18 18" fill="currentColor">{children}</svg>
    </button>
  );
}

function MixerTools() {
  return (
    <div className="flex w-14 shrink-0 flex-col bg-[#36393e]">
      <div className="flex h-[23px] items-center justify-between bg-[#222326] px-[8px]">
        <button type="button" aria-label="Fermer la console"><svg width="10" height="10" viewBox="0 0 10 10" stroke="#c9cbcd" strokeWidth="1.600"><path d="M.5.500l9 9M9.500.500l-9 9" /></svg></button>
        <button type="button" aria-label="Détacher"><svg width="9" height="9" viewBox="0 0 9 9" stroke="#c9cbcd" strokeWidth="1.500" fill="none"><path d="M.5 8.500L7.500 1.500M3 1H8v5" /></svg></button>
      </div>
      <button type="button" className="flex h-[22px] items-center bg-[#484a4e] text-[12px] text-[#b4b6b9]"><span className="flex h-full w-[41px] items-center justify-center border-r border-[#2f3134]">E/S</span><Caret className="ml-[3px]" /></button>
      <button type="button" aria-label="Options de console" className="mt-px flex h-[21px] items-center justify-center bg-[#44464a] text-[#b4b6b9]"><Wrench size={11} /></button>
      <button type="button" aria-label="Faders" className="mt-px flex h-[21px] items-center bg-[#484a4e] pl-3 text-[#b4b6b9]"><svg width="16" height="16" viewBox="0 0 16 16" fill="currentColor"><path d="M4 2v13M11 0v16" stroke="currentColor" /><path d="M1 5h6v8H1z" fill="#85888b" /><path d="M7 3h7v7H7z" /><path d="M7 6.500h7" stroke="#484a4e" /></svg><Caret className="ml-[15px]" /></button>
      <div className="mt-auto">
        <SideButton label="Réduire en hauteur" tall><path d="M4 0h10l-5 7zM4 18h10l-5-7z" /></SideButton>
        <SideButton label="Réduire en largeur" tall><path d="M0 4v10l7-5zM18 4v10l-7-5z" /></SideButton>
        <SideButton label="Entrées"><path d="M14 4h3v10h-3zM2 7.800h5V4l5 5-5 5v-3.800H2z" /></SideButton>
        <SideButton label="Sorties"><path d="M1 4h3v10H1zM6 7.800h5V4l5 5-5 5v-3.800H6z" /></SideButton>
        <SideButton label="Externe"><path d="M1 4h16v10H1zM5 4v10M1 6.500h4M8 7v7M11 7v7M14 7v7M7 6.500h8" fill="none" stroke="currentColor" strokeWidth="1.200" /></SideButton>
        <SideButton label="Instruments" active><path d="M1 4h3v6h1.500V4h2.500v6h1.500V4H12v6h1.500V4H17v11H1z" /></SideButton>
        <SideButton label="Scènes"><path d="M1 7h12v7H1zM3 5h12v7M5 3h12v7M4 7v7M7 7v7M10 7v7" fill="none" stroke="currentColor" strokeWidth="1.200" /></SideButton>
        <SideButton label="Groupes"><path d="M2 8h3v8H2zM7 6h4v10H7zM13 8h3v8h-3z" /><circle cx="3.500" cy="6" r="1.300" /><circle cx="9" cy="3.500" r="1.800" /><circle cx="14.500" cy="6" r="1.300" /></SideButton>
        <SideButton label="Liste" active><path d="M0 3h18v2.400H0zM0 6.500h18v2.400H0zM0 10h18v2.400H0zM0 13.500h18v2.400H0z" /></SideButton>
      </div>
    </div>
  );
}

function ChannelList() {
  return (
    <div className="flex w-[199px] shrink-0 flex-col border-x border-black bg-[#36393e]">
      <table className="w-full table-fixed border-collapse text-[11px]">
        <thead>
          <tr className="h-[23px] bg-[#222326] text-[#d3d5d7]">
            <th className="w-[153px] border-r border-[#3a3c40] pl-12 text-center font-normal" scope="col">Canal</th>
            <th className="text-center font-normal" scope="col">Groupe</th>
          </tr>
        </thead>
        <tbody>
          {CHANNELS.map((channel) => (
            <tr key={channel.id} className={clsx("h-5", channel.id === 11 && "bg-[#474b52]")}>
              <td className="p-0">
                <div className="flex h-5 items-center text-[#b4b7bb]">
                  <span className="w-[32px] text-right">{channel.id}</span>
                  <span className="ml-[17px] size-[6px] rounded-full bg-[#dfe1e3]" />
                  <svg width="11" height="7" viewBox="0 0 11 7" className="ml-[7px] fill-[#dfe1e3]"><path d="M0 3.500Q2.500-1.500 5 2.500l1.500 1 4.500 0Q8.500 8.500 6 4.500l-1.500-1z" /></svg>
                  <span className={clsx("ml-[4px] h-[18px] w-[6px]", channel.chip)} />
                  <span className="ml-[14px] whitespace-nowrap">{channel.short}</span>
                </div>
              </td>
              <td />
            </tr>
          ))}
        </tbody>
      </table>
      <div className="mt-auto flex items-center px-[5px] pb-[7px]">
        <label className="flex h-5 w-[158px] items-center rounded-[2px] border border-[#55585c] bg-[#303237] px-2">
          <input type="text" aria-label="Filtre" placeholder="Filtre" className="min-w-0 flex-1 bg-transparent pr-3 text-center text-[11px] outline-none placeholder:text-[#777a7e]" />
          <svg width="7" height="7" viewBox="0 0 7 7" stroke="#b4b6b9" strokeWidth="1.400"><path d="M.5.500l6 6M6.500.500l-6 6" /></svg>
        </label>
        <button type="button" aria-label="Plus d'options" className="ml-[10px] flex gap-[3px]"><i className="size-[3px] rounded-full bg-[#a4a7ab]" /><i className="size-[3px] rounded-full bg-[#a4a7ab]" /><i className="size-[3px] rounded-full bg-[#a4a7ab]" /></button>
      </div>
      <div className="flex h-[21px] shrink-0 divide-x divide-[#2f3134] bg-[#3c3e42] text-[#7b7e81]">
        <button type="button" aria-label="Audio" className="flex w-[28px] items-center justify-center bg-[#2a84c6] text-white"><WaveIcon className="h-[11px] w-[14px]" /></button>
        <button type="button" aria-label="Claviers" className="flex flex-1 items-center justify-center"><svg width="11" height="9" viewBox="0 0 11 9" fill="currentColor"><path d="M0 0h2v5h1.500V0h1v5h2V0h1v5H9V0h2v9H0z" /></svg></button>
        <button type="button" className="flex-1 font-bold text-[10px]">FX</button>
        <button type="button" aria-label="Bus" className="flex flex-1 items-center justify-center"><svg width="11" height="9" viewBox="0 0 11 9" fill="none" stroke="currentColor" strokeWidth="1.300"><path d="M0 1h5v7H0M0 4.500h11" /></svg></button>
        <button type="button" aria-label="VCA" className="flex flex-1 items-center justify-center"><svg width="12" height="10" viewBox="0 0 12 10" fill="currentColor"><path d="M2.500 0v10M9.500 0v10" stroke="currentColor" /><path d="M0 6h5v2H0zM7.500 1h4v4h-4z" /></svg></button>
        <button type="button" className="flex-1 font-bold text-[10px]">AUX</button>
        <button type="button" aria-label="Tout" className="flex w-[26px] items-center justify-center bg-[#4b4d51] text-[#dfe1e3]"><svg width="13" height="10" viewBox="0 0 13 10" fill="none" stroke="currentColor" strokeWidth="1.200"><path d="M.6.600h11.800v8.800H.6zM.6 3.500h11.800M.6 6.500h11.800M3.600.600v8.800M6.500.600v8.800M9.500.600v8.800" /></svg></button>
      </div>
    </div>
  );
}

function Instruments() {
  return (
    <div className="flex w-[179px] shrink-0 flex-col border-r-2 border-black bg-[#36393e]">
      <div className="flex h-[23px] items-center bg-[#222326] pr-[3px] pl-[5px] text-[#d3d5d7]">
        <span className="flex-1">Instruments</span>
        <Caret className="mr-[8px]" />
        <svg width="11" height="11" viewBox="0 0 11 11" stroke="currentColor" strokeWidth="1.800"><path d="M5.500 0v11M0 5.500h11" /></svg>
      </div>
      <div className="mt-auto flex h-[17px] justify-end divide-x divide-black bg-[#28292c]">
        <button type="button" aria-label="Petit" className="flex w-[35px] items-end justify-center border-l border-black pb-1"><span className="h-[2px] w-4 bg-[#dfe1e3]" /></button>
        <button type="button" aria-label="Grand" className="flex w-[37px] items-center justify-center"><span className="h-[6px] w-4 border border-[#77797c]" /></button>
      </div>
    </div>
  );
}

function Inserts() {
  return (
    <div className="flex h-5 items-center px-[4px] text-[#6d7074]">
      <Power />
      <span className="ml-[2px] flex-1 text-[11px] text-[#b9bcc0]">Inserts</span>
      <Caret className="mr-[5px]" />
      <svg width="9" height="9" viewBox="0 0 9 9" stroke="#85888c" strokeWidth="1.700"><path d="M4.500 0v9M0 4.500h9" /></svg>
    </div>
  );
}

const SCALE: [string, number][] = [["10", 15], ["6", 23], ["0", 36], ["-6", 49], ["-12", 60], ["-24", 73], ["-36", 85], ["-48", 94]];
const MAIN_SCALE: [string, number][] = [["6", 5], ["-3", 16], ["-9", 25], ["-24", 49], ["-36", 68], ["-48", 87], ["-60", 104]];

function Scale({ marks, width }: { marks: [string, number][]; width: number }) {
  return (
    <svg width={width} height="109" viewBox={`0 0 ${width} 109`} className="shrink-0 fill-[#c3c6ca] text-[8px]">
      {marks.map(([text, y]) => <text key={text} x={width} y={y + 3} textAnchor="end">{text}</text>)}
    </svg>
  );
}

function Meter({ marks, zero }: { marks: number[]; zero: number }) {
  return (
    <svg width="14" height="109" viewBox="0 0 14 109" className="shrink-0">
      <rect width="14" height="109" rx="2" fill="#1d2125" />
      {marks.map((y) => <path key={y} d={`M3 ${y + 0.5}h9`} stroke={y === zero ? "#8f9396" : "#2b4450"} />)}
    </svg>
  );
}

function Fader({ label, value, main, selected }: { label: string; value: number; main?: boolean; selected?: boolean }) {
  return (
    <div className="grid shrink-0">
      <svg width="18" height="109" viewBox="0 0 18 109" className="col-start-1 row-start-1">
        <rect x="2" y="50" width="14" height="59" fill={selected ? "#747b87" : "#4e5157"} />
        <path d="M4 26.500h10M4 64.500h10M4 74.500h10M4 80.500h10M4 86.500h10" stroke="#70747a" />
        <path d="M9 16v76" stroke="#0d0e10" strokeWidth="2" />
      </svg>
      <input
        type="range"
        aria-label={label}
        defaultValue={value}
        className={clsx(
          "col-start-1 row-start-1 h-[109px] w-[18px] appearance-none bg-transparent [direction:rtl] [writing-mode:vertical-lr] [&::-webkit-slider-thumb]:h-9 [&::-webkit-slider-thumb]:w-[18px] [&::-webkit-slider-thumb]:appearance-none [&::-webkit-slider-thumb]:rounded-[2px] [&::-webkit-slider-thumb]:border [&::-webkit-slider-thumb]:border-[#17181a]",
          main
            ? "[&::-webkit-slider-thumb]:bg-[linear-gradient(#7cc4e0_2px,#2e6f90_3px,#4a9cc4_10px,#58b0d8_17px,#1e4a60_17px,#1e4a60_18px,#58b0d8_18px,#4a9cc4_28px,#8ad0ea_32px)]"
            : "[&::-webkit-slider-thumb]:bg-[linear-gradient(#ffffff_2px,#85878a_3px,#d0d1d2_9px,#ffffff_14px,#ffffff_17px,#333333_17px,#333333_18px,#ffffff_18px,#ffffff_30px,#9a9c9e_31px,#ffffff_32px)]",
        )}
      />
    </div>
  );
}

function LinkBadge({ selected }: { selected?: boolean }) {
  return (
    <svg width="17" height="17" viewBox="0 0 17 17" className={selected ? "text-[#c9ccd0]" : "text-[#9a9da0]"}>
      <circle cx="8.500" cy="8.500" r="8.200" fill="currentColor" />
      <rect x="3" y="5" width="11" height="7.500" rx="2" fill="#2b2d31" />
      <path d="M8.500 5v8M11.500 5v8" stroke="currentColor" />
    </svg>
  );
}

function ChannelStrip({ channel, selected }: { channel: (typeof CHANNELS)[number]; selected: boolean }) {
  return (
    <article className={clsx("flex w-[87px] shrink-0 flex-col border-r-2 border-[#101113]", selected ? "bg-[#656a73]" : "bg-[#3d4044]")}>
      <div className={clsx("h-[3px]", channel.bar)} />
      <div className={clsx("h-[57px] border-b border-black", selected ? "bg-[#656a73]" : "bg-[#3a3d41]")}>
        <div className={clsx(selected && "bg-[#3d4044]")}><Inserts /></div>
      </div>
      <div className="h-[4px] bg-[#202225]" />
      <div className={clsx("h-[3px]", channel.bar)} />
      <svg width="77" height="16" viewBox="0 0 77 16" className="mt-[5px] ml-1">
        <rect x=".5" y=".5" width="76" height="15" rx="2" fill="#1a1b1d" stroke="#0a0a0b" />
        <path d="M0 1h77L38.500 15z" fill="#0c0d0e" />
        <path d="M39 1v14" stroke="#4db4d4" strokeWidth="2" />
      </svg>
      <div className="mt-[4px] flex h-[14px] items-center pl-[5px]">
        <svg width="8" height="8" viewBox="0 0 8 8" className="fill-[#26282b] stroke-[#17181a]"><path d="M.5 1h7v2.500L4 7 .5 3.500z" /></svg>
        <span className="ml-[18px] text-[11px] text-[#dfe1e3]">&lt;C&gt;</span>
      </div>
      <div className={clsx("mt-[6px] ml-2 grid w-[69px] grid-cols-2 gap-px rounded-[2px] border border-[#17181a] bg-[#17181a]", selected ? "text-[#dfe1e3]" : "text-[#b4b7bb]")}>
        <button type="button" className={clsx("h-[19px] text-[12px]", selected ? "bg-[#50555d]" : "bg-[#ab2727] text-[#eed9d9]")}>M</button>
        <button type="button" className={clsx("h-[19px] text-[12px]", selected ? "bg-[#dcb13f] text-[#fff3cf]" : "bg-[#393c41]")}>S</button>
        <button type="button" aria-label="Armer" className={clsx("flex h-[20px] items-center justify-center", selected ? "bg-[#50555d]" : "bg-[#393c41]")}><span className="size-[9px] rounded-full bg-current" /></button>
        <button type="button" aria-label="Monitoring" className={clsx("flex h-[20px] items-center justify-center", selected ? "bg-[#50555d]" : "bg-[#393c41]")}><Monitor /></button>
      </div>
      <output className="mt-[9px] h-[12px] w-[79px] text-center text-[11px] text-[#d3d5d7]">{selected ? "+4.8" : "0dB"}</output>
      <div className="mt-[6px] flex">
        <Scale marks={SCALE} width={15} />
        <div className="ml-px"><Meter marks={[14, 22, 36, 49, 60, 73, 86, 96, 103]} zero={36} /></div>
        <div className="ml-[4px]"><Fader label={`Fader ${channel.name}`} value={selected ? 86 : 75} selected={selected} /></div>
        <div className="flex flex-1 flex-col items-center justify-between pr-[2px] pb-0.5">
          <Lines className={selected ? "text-[#4a4d52]" : "text-[#5f6266]"} />
          <LinkBadge selected={selected} />
        </div>
      </div>
      <div className={clsx("flex h-[26px] items-center justify-between pr-[10px] pl-[16px] text-[12px]", selected ? "text-[#eceef0]" : "text-[#c3c6ca]")}>
        <span>{channel.id}</span>
        <WaveIcon />
      </div>
      <button type="button" className={clsx("ml-[7px] h-4 w-[71px] rounded-[1px] text-[11px] text-[#85888b]", selected ? "bg-[#41454c]" : "bg-[#292b2e]")}>Auto: Off</button>
      <div className={clsx("mt-[5px] h-[15px] overflow-hidden rounded-b-[5px] text-center text-[11px] leading-[15px] whitespace-nowrap", channel.tag)}>{channel.name}</div>
    </article>
  );
}

function MainStrip() {
  return (
    <article className="flex w-[85px] shrink-0 flex-col border-l border-black bg-[#303338]">
      <div className="h-[3px] bg-[#404348]" />
      <button type="button" className="flex h-[19px] items-center justify-end border-b border-black bg-[#1d333f] pr-[3px] text-[#c3c6ca]">Mix FX<Caret className="ml-[20px] text-[#85888b]" /></button>
      <div className="h-[38px] border-b border-black"><Inserts /></div>
      <div className="h-[4px] bg-[#202225]" />
      <div className="h-[3px] bg-[#404348]" />
      <div className="mt-[5px] ml-1 grid h-4 w-[77px] grid-cols-2 gap-px border border-black bg-black text-center text-[10px] leading-[14px] text-[#3f7f9c]">
        <span className="bg-[#1d1f22]">-∞</span>
        <span className="bg-[#1d1f22]">-∞</span>
      </div>
      <div className="mt-[24px] ml-2 flex w-[69px] flex-wrap gap-px rounded-[2px] border border-[#17181a] bg-[#17181a] text-[#b4b7bb]">
        <button type="button" className="h-[19px] w-[33px] bg-[#303338] text-[12px]">M</button>
        <button type="button" className="h-[19px] w-[33px] bg-[#dcb13f] text-[12px] text-[#fff3cf]">S</button>
        <button type="button" aria-label="Métronome" className="flex h-5 w-[25px] items-center justify-center bg-[#4a98bd] text-white"><Metronome size={12} /></button>
        <button type="button" aria-label="Fader" className="flex h-5 w-[14px] items-center justify-center bg-[#393c41]"><svg width="7" height="13" viewBox="0 0 7 13" fill="currentColor"><path d="M3 0h1v13H3zM0 3h7v5l-2 1H2L0 8z" /></svg></button>
        <button type="button" aria-label="Mono" className="flex h-5 w-[26px] items-center justify-center bg-[#393c41]"><Stereo /></button>
      </div>
      <output className="mt-[9px] h-[12px] w-[82px] text-center text-[11px] text-[#d3d5d7]">-10.4</output>
      <div className="mt-[6px] flex">
        <div className="flex w-[31px] flex-col items-center justify-between pb-0.5 pl-[6px]">
          <Lines className="text-[#5f6266]" />
          <LinkBadge />
        </div>
        <Fader label="Fader Main" value={53} main />
        <div className="ml-[3px]"><Meter marks={[2, 11, 21, 30, 49, 68, 87, 106]} zero={11} /></div>
        <Scale marks={MAIN_SCALE} width={14} />
      </div>
      <button type="button" className="mt-[26px] ml-[7px] h-4 w-[71px] rounded-[1px] bg-[#28292c] text-[11px] text-[#85888b]">Auto: Off</button>
      <div className="mt-[5px] h-[15px] bg-[#1f2022] text-center text-[11px] leading-[15px] text-white">Main</div>
    </article>
  );
}

/* ---------- transport ---------- */

function TransportCell({ width, value, label }: { width: string; value: string; label: string }) {
  return (
    <div className={clsx("flex shrink-0 flex-col items-center gap-[5px]", width)}>
      <span className="text-[13px] text-[#dfe1e3]">{value}</span>
      <span className="text-[11px] text-[#85888b]">{label}</span>
    </div>
  );
}

function TransportButton({ label, width, size = 18, children }: { label: string; width: string; size?: number; children: ReactNode }) {
  return (
    <button type="button" aria-label={label} className={clsx("flex h-6 shrink-0 items-center justify-center text-[#c9cbcd]", width)}>
      <svg width={size} height={size} viewBox="0 0 18 18" fill="currentColor">{children}</svg>
    </button>
  );
}

function Transport() {
  const dots = Array.from({ length: 14 }, (_, i) => (i / 14) * Math.PI * 2);
  return (
    <footer className="mt-[2px] flex h-12 shrink-0 items-start border-t border-black bg-[#383b3f]">
      <div className="ml-[102px] flex h-[41px] w-[1544px] shrink-0 items-center bg-[#161719] pl-[10px] [clip-path:polygon(0_0,100%_0,calc(100%-12px)_100%,10px_100%)]">
        <div className="flex w-[45px] shrink-0 flex-col items-center gap-[4px] text-[11px] text-[#85888b]">
          <svg width="28" height="15" viewBox="0 0 28 15"><circle cx="14" cy="7.500" r="6.500" fill="none" stroke="#5d6063" strokeWidth="1.300" /><path d="M0 4.500v6l3.500-3zM28 4.500v6l-3.500-3z" fill="#5d6063" /><g fill="#85888b"><circle cx="10" cy="8" r="1" /><circle cx="11.300" cy="5" r="1" /><circle cx="14" cy="4" r="1" /><circle cx="16.700" cy="5" r="1" /><circle cx="18" cy="8" r="1" /></g></svg>
          MIDI
        </div>
        <div className="flex w-[77px] shrink-0 flex-col pl-px text-[11px] text-[#a4a7ab]">
          <div className="h-[5px] w-16 bg-[#2f3134]" />
          <div className="mt-[2px] mb-[6px] h-[5px] w-16 bg-[#2f3134]" />
          Performances
        </div>
        <svg width="24" height="24" viewBox="0 0 24 24" className="mr-[12px] ml-[6px] shrink-0 fill-[#a4a7ab]">
          {dots.map((a, i) => <circle key={i} cx={12 + Math.sin(a) * 10.5} cy={12 - Math.cos(a) * 10.5} r="1.300" />)}
        </svg>
        <div className="flex w-[68px] shrink-0 flex-col gap-1 text-[12px] text-[#dfe1e3]"><span>48.0 kHz</span><span className="text-[11px]">0.0 ms</span></div>
        <div className="flex w-[122px] shrink-0 flex-col gap-[5px] text-[12px] text-[#dfe1e3]"><span>10:02 jours</span><span className="text-[11px] text-[#85888b]">Enregistrement max.</span></div>
        <div className="flex w-[78px] shrink-0 flex-col items-center gap-[5px]">
          <span className="text-[13px] text-[#c9cbcd]">00:00:11.545</span>
          <span className="flex items-center gap-1 text-[#85888b]">Secondes <Caret /></span>
        </div>
        <div className="ml-[27px] flex w-[136px] shrink-0 flex-col items-center gap-[3px]">
          <span className="text-[19px] text-[#dfe1e3]">00006.04.01.36</span>
          <span className="flex items-center gap-1 text-[#85888b]">Mesures <Caret /></span>
        </div>
        <div className="ml-[14px] flex items-center">
          <TransportButton label="Précédent" width="w-[22px]"><path d="M13 3v12L4 9z" /></TransportButton>
          <TransportButton label="Rembobiner" width="w-[30px]"><path d="M9 3v5l8-5v12l-8-5v5L0 9z" /></TransportButton>
          <TransportButton label="Avance rapide" width="w-[30px]"><path d="M9 3v5L1 3v12l8-5v5l9-6z" /></TransportButton>
          <TransportButton label="Suivant" width="w-[18px]"><path d="M5 3v12l9-6z" /></TransportButton>
          <TransportButton label="Retour à zéro" width="w-[34px]"><path d="M3 3h1.600v12H3zM15 3v12L6 9z" /></TransportButton>
          <TransportButton label="Arrêt" width="w-[38px]" size={20}><path d="M0 0h18v18H0z" fill="#2aafdc" /></TransportButton>
          <TransportButton label="Lecture" width="w-[36px]" size={20}><path d="M2 0v18l15-9z" /></TransportButton>
          <TransportButton label="Enregistrer" width="w-[32px]" size={20}><circle cx="9" cy="9" r="9" /></TransportButton>
          <button type="button" aria-label="Boucle" className="flex h-6 w-[50px] items-center justify-center">
            <svg width="34" height="20" viewBox="0 0 34 20" fill="none" stroke="#a4a7ab" strokeWidth="2.200"><path d="M11 18.500Q2 18.500 2 10 2 1.500 10 1.500h14q8 0 8 8.500 0 8.500-9 8.500l3.500-8M17 10.500l-3.500 8H11" /></svg>
          </button>
        </div>
        <div className="ml-[9px] grid w-[114px] shrink-0 grid-cols-[23px_1fr] gap-y-[3px] text-[13px] text-[#dfe1e3]">
          <span className="text-[12px] text-[#4d7d92]">G</span><span>00001.01.01.00</span>
          <span className="text-[12px] text-[#4d7d92]">D</span><span>00001.01.01.00</span>
        </div>
        <div className="ml-[9px] flex w-[50px] shrink-0 flex-col items-center gap-[6px] text-[#85888b]"><Power />Synchro</div>
        <div className="grid w-[50px] shrink-0 grid-cols-2 place-items-center gap-y-[5px] text-[#85888b]">
          <svg width="16" height="11" viewBox="0 0 16 11" fill="none" stroke="currentColor" strokeWidth="1.500"><path d="M0 2h4q2 0 4 3t4 3h4M9 6h7" /></svg>
          <svg width="15" height="11" viewBox="0 0 15 11" fill="currentColor"><path d="M0 0h1.500v11H0zM4 0h1.500v11H4zM5 5h3V2h7v7H8V6H5z" /></svg>
          <svg width="12" height="12" viewBox="0 0 12 12" fill="none" stroke="currentColor"><circle cx="6" cy="6" r="3" strokeWidth="2" /><path d="M6 0v12M0 6h12M1.800 1.800l8.400 8.400M10.200 1.800l-8.400 8.400" strokeWidth="1.500" strokeDasharray="2.500 7 2.500" /></svg>
          <svg width="16" height="11" viewBox="0 0 16 11" fill="currentColor"><path d="M0 5h16v1H0zM2 2h1.500v7H2zM5 2h6v7H5zM12.500 2H14v7h-1.500z" /></svg>
        </div>
        <div className="flex w-[70px] shrink-0 flex-col items-center gap-[5px] text-[#85888b]">
          <div className="flex items-center gap-[9px]"><span className="size-[10px] rounded-full bg-[#77797c]" /><Wrench size={12} /><Metronome size={12} /></div>
          Métronome
        </div>
        <TransportCell width="w-[54px]" value="4 / 4" label="Mesure" />
        <TransportCell width="w-[42px]" value="-" label="Tonalité" />
        <TransportCell width="w-[62px]" value="0" label="Transposer" />
        <TransportCell width="w-[54px]" value="120.00" label="Tempo" />
        <svg width="92" height="28" viewBox="0 0 92 28" className="ml-[10px] shrink-0">
          <path d="M0 0h66v5H0zM0 7h66v5H0zM68 0h22v5H68zM68 7h22v5H68z" fill="#333538" />
          {Array.from({ length: 33 }, (_, i) => <rect key={i} x={i * 2} y="18" width="1" height="9" fill={i < 18 ? "#58a8c8" : "#3a3d41"} />)}
          <circle cx="79" cy="22.500" r="4.500" fill="#4db4d4" /><circle cx="85" cy="22.500" r="4" fill="#161719" stroke="#4db4d4" strokeWidth="1.500" />
        </svg>
      </div>
      <nav className="ml-auto flex h-[45px] text-[12px] text-[#d3d5d7]">
        {["Éditer", "Mixer", "Parcourir"].map((view) => (
          <button key={view} type="button" className={clsx("h-full shrink-0 border-l border-[#2b2d30]", view === "Parcourir" ? "w-[64px]" : "w-[56px]", view === "Mixer" && "bg-[#327fd2] text-white")}>{view}</button>
        ))}
      </nav>
    </footer>
  );
}
